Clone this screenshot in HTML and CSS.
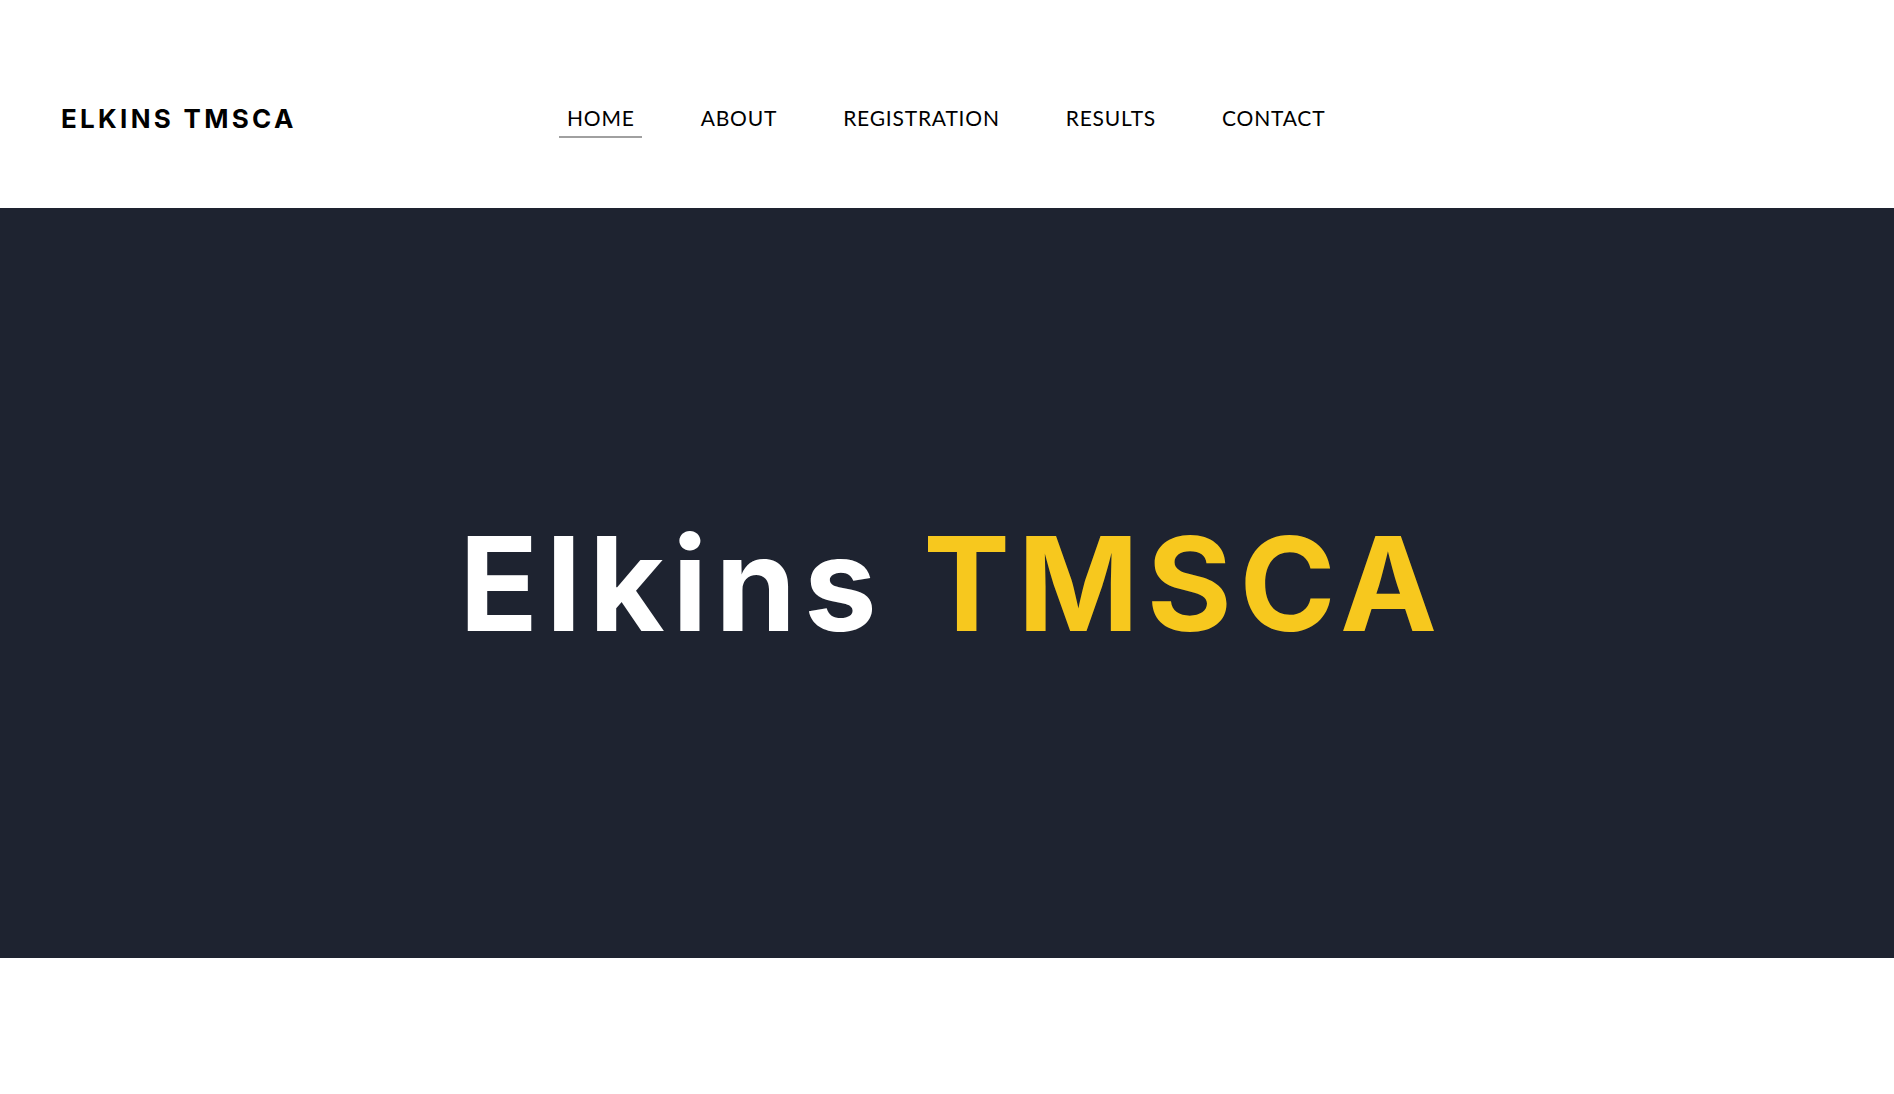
FILE: index.html
```html
<!DOCTYPE html>
<html lang="en">
<head>
<meta charset="utf-8">
<title>Elkins TMSCA</title>
<link rel="stylesheet" href="styles.css">
</head>
<body>
<header class="site-header">
  <div class="logo">ELKINS TMSCA</div>
  <nav class="nav">
    <a class="nav-link active" href="#">HOME</a>
    <a class="nav-link" href="#">ABOUT</a>
    <a class="nav-link" href="#">REGISTRATION</a>
    <a class="nav-link" href="#">RESULTS</a>
    <a class="nav-link" href="#">CONTACT</a>
  </nav>
</header>
<section class="hero">
  <h1 class="hero-title">Elkins <span class="accent">TMSCA</span></h1>
</section>
</body>
</html>
```

FILE: styles.css
```css
* { box-sizing: border-box; }
html, body { margin: 0; padding: 0; background: #ffffff; }
body { font-family: "Inter", "Liberation Sans", sans-serif; }

.site-header {
  height: 208px;
  display: flex;
  align-items: center;
  padding: 28px 0 0 61px;
}

.logo {
  font-family: "Inter", sans-serif;
  font-weight: 700;
  font-size: 26px;
  letter-spacing: 3.3px;
  color: #000;
  width: 498px;
}

.nav {
  display: flex;
  align-items: center;
  gap: 51px;
}

.nav-link {
  font-family: "Lato", sans-serif;
  font-weight: 400;
  font-size: 21px;
  letter-spacing: 0.8px;
  color: #000;
  text-decoration: none;
  padding: 6px 7px 6px 8px;
  border-bottom: 2px solid transparent;
}

.nav-link.active { border-bottom-color: #a0a0a0; }

.hero {
  height: 750px;
  background: #1e2330;
  display: flex;
  align-items: center;
  justify-content: center;
}

.hero-title {
  margin: 0;
  font-family: "Inter", sans-serif;
  font-weight: 700;
  font-size: 130px;
  letter-spacing: 7.8px;
  color: #ffffff;
  line-height: 1;
  padding: 2px 0 0 10px;
}

.accent { color: #f7c81e; }
```
